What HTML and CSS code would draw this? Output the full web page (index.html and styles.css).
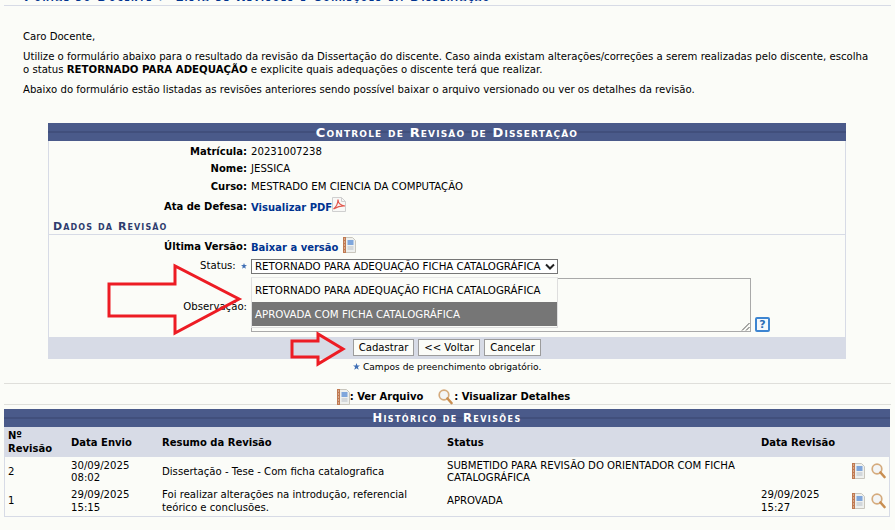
FILE: index.html
```html
<!DOCTYPE html>
<html lang="pt-BR">
<head>
<meta charset="utf-8">
<title>Controle de Revisão de Dissertação</title>
<link rel="stylesheet" href="styles.css">
</head>
<body>
<svg class="defs" width="0" height="0" aria-hidden="true">
  <defs>
    <symbol id="i-doc" viewBox="0 0 13 16">
      <path d="M.5.500h9l3 3v12H.5z" fill="#eef0ee" stroke="#c9c6bd"/>
      <rect x="0" y="0" width="3" height="16" fill="#c07a52"/>
      <path d="M1 2h1M1 5h1M1 8h1M1 11h1M1 14h1" stroke="#f1dccb" stroke-width="1"/>
      <rect x="4.500" y="3" width="6" height="5" fill="#7fa6dc"/>
      <path d="M4.500 10h6M4.500 12h6" stroke="#b8bfc8"/>
    </symbol>
    <symbol id="i-lens" viewBox="0 0 15 16">
      <circle cx="6" cy="6" r="4.800" fill="#f3f5f6" stroke="#d5ab7d" stroke-width="1.700"/>
      <path d="M9.500 9.500L13.500 14" stroke="#c98f52" stroke-width="2.600" stroke-linecap="round"/>
    </symbol>
    <symbol id="i-star" viewBox="0 0 8 8">
      <path d="M4 0l1 2.800 3 .1-2.400 1.800.9 3L4 6 1.500 7.700l.9-3L0 2.900l3-.1z" fill="#3f6fb5"/>
    </symbol>
  </defs>
</svg>

<h2 class="page-title">Portal do Docente &gt; Lista de Revisões e Correções em Dissertação</h2>

<div class="intro">
  <p>Caro Docente,</p>
  <p>Utilize o formulário abaixo para o resultado da revisão da Dissertação do discente. Caso ainda existam alterações/correções a serem realizadas pelo discente, escolha o status <b>RETORNADO PARA ADEQUAÇÃO</b> e explicite quais adequações o discente terá que realizar.</p>
  <p>Abaixo do formulário estão listadas as revisões anteriores sendo possível baixar o arquivo versionado ou ver os detalhes da revisão.</p>
</div>

<form class="form-box">
  <div class="caption">Controle de Revisão de Dissertação</div>
  <div class="form-body">
    <div class="row r-mat"><span class="lbl">Matrícula:</span><span>20231007238</span></div>
    <div class="row r-nome"><span class="lbl">Nome:</span><span>JESSICA</span></div>
    <div class="row r-curso"><span class="lbl">Curso:</span><span>MESTRADO EM CIENCIA DA COMPUTAÇÃO</span></div>
    <div class="row r-ata"><span class="lbl">Ata de Defesa:</span><span class="val-icon"><a class="link" href="#">Visualizar PDF</a><svg class="pdf" width="14" height="15" viewBox="0 0 14 15"><path d="M.5.500h9l4 4v10H.5z" fill="#f8f8f6" stroke="#cfcfcf"/><path d="M9.500.500v4h4" fill="none" stroke="#cfcfcf"/><path d="M1.500 12C4 10 6 7 6 2.500c0 3 2 6 7 6.500-4-.5-8 1-11.500 3z" fill="none" stroke="#e2574c" stroke-width="1.200"/></svg></span></div>
    <div class="subhead">Dados da Revisão</div>
    <div class="row r-ult"><span class="lbl">Última Versão:</span><span class="val-icon"><a class="link" href="#">Baixar a versão</a><svg class="doc-ult" width="13" height="16"><use href="#i-doc"/></svg></span></div>
    <div class="row r-status"><span class="lbl-plain">Status: <svg class="star" width="6" height="6"><use href="#i-star"/></svg></span><span class="select"><span>RETORNADO PARA ADEQUAÇÃO FICHA CATALOGRÁFICA</span><svg width="10" height="7" viewBox="0 0 10 7"><path d="M1 1.500l4 4 4-4" fill="none" stroke="#222" stroke-width="2"/></svg></span></div>
    <div class="row r-obs">
      <span class="lbl-plain obs-l">Observação:</span>
      <div class="obs-val">
        <div class="textarea"><svg class="grip" width="9" height="9" viewBox="0 0 9 9"><path d="M8.500 1L1 8.500M8.500 5L5 8.500" stroke="#555"/></svg></div>
        <span class="help">?</span>
      </div>
    </div>
  </div>
  <div class="form-foot">
    <button type="button" class="b1">Cadastrar</button>
    <button type="button" class="b2">&lt;&lt; Voltar</button>
    <button type="button" class="b3">Cancelar</button>
  </div>
  <ul class="dropdown">
    <li>RETORNADO PARA ADEQUAÇÃO FICHA CATALOGRÁFICA</li>
    <li class="sel">APROVADA COM FICHA CATALOGRÁFICA</li>
  </ul>
</form>

<p class="required"><svg class="star" width="7" height="7"><use href="#i-star"/></svg> Campos de preenchimento obrigatório.</p>

<div class="legend">
  <svg width="13" height="16"><use href="#i-doc"/></svg><span>: Ver Arquivo</span>
  <svg class="leg-lens" width="15" height="16"><use href="#i-lens"/></svg><span>: Visualizar Detalhes</span>
</div>

<div class="history">
  <div class="caption small">Histórico de Revisões</div>
  <table>
    <thead>
      <tr>
        <th class="c1">Nº Revisão</th><th class="c2">Data Envio</th><th class="c3">Resumo da Revisão</th><th class="c4">Status</th><th class="c5">Data Revisão</th><th class="c6"></th>
      </tr>
    </thead>
    <tbody>
      <tr>
        <td>2</td><td>30/09/2025 08:02</td><td>Dissertação - Tese - Com ficha catalografica</td><td>SUBMETIDO PARA REVISÃO DO ORIENTADOR COM FICHA CATALOGRÁFICA</td><td></td>
        <td class="acts"><svg width="13" height="16"><use href="#i-doc"/></svg><svg width="15" height="16"><use href="#i-lens"/></svg></td>
      </tr>
      <tr>
        <td>1</td><td>29/09/2025 15:15</td><td>Foi realizar alterações na introdução, referencial teórico e conclusões.</td><td>APROVADA</td><td>29/09/2025 15:27</td>
        <td class="acts"><svg width="13" height="16"><use href="#i-doc"/></svg><svg width="15" height="16"><use href="#i-lens"/></svg></td>
      </tr>
    </tbody>
  </table>
</div>

<svg class="arrows" width="895" height="530" viewBox="0 0 895 530" aria-hidden="true">
  <path d="M109 284H175V266L239 299 175 333V316H109z" fill="none" stroke="#ed1c24" stroke-width="3"/>
  <path d="M292 341H318V334L343 349 318 364V357H292z" fill="none" stroke="#ed1c24" stroke-width="3"/>
</svg>
</body>
</html>
```

FILE: styles.css
```css
* { box-sizing: border-box; }
html, body { margin: 0; padding: 0; height: 530px; overflow: hidden; }
body {
  position: relative;
  background: #fbfcf8;
  color: #000;
  font-family: "DejaVu Sans", Verdana, sans-serif;
  font-size: 10.150px;
  line-height: 12px;
}
.defs { position: absolute; }
.page-title {
  margin: -9px 4px 0;
  padding: 0 20px 2px;
  height: 15px;
  border-bottom: 1px solid #d7dbe6;
  color: #003390;
  font-size: 12px;
  line-height: 12px;
  font-weight: bold;
  font-variant: small-caps;
  letter-spacing: 1.400px;
  white-space: nowrap;
  overflow: hidden;
}
.intro { padding: 0 24px 0 23px; margin-top: 25px; }
.intro p { margin: 0 0 8px; }
.intro p + p { line-height: 12.500px; }
.intro b { font-size: 10.200px; }

.form-box {
  position: relative;
  width: 798px;
  margin: 26px 0 0 48px;
}
.caption {
  height: 18px;
  background: linear-gradient(#4a5a8a 0 8px, #414f7c 8px 10px, #4a5a8a 10px);
  color: #fff;
  text-align: center;
  font-weight: bold;
  font-variant: small-caps;
  font-size: 13px;
  line-height: 19px;
  letter-spacing: 1.150px;
}
.form-body {
  height: 196px;
  border: solid #d7dbe6;
  border-width: 0 1px;
  position: relative;
}
.row {
  display: grid;
  grid-template-columns: 198px 1fr;
  column-gap: 4px;
  align-items: center;
}
.lbl { text-align: right; font-weight: bold; font-size: 10px; }
.lbl-plain { text-align: right; }
.r-mat { padding-top: 5px; height: 17px; }
.r-nome { padding-top: 5px; height: 17px; }
.r-curso { padding-top: 6px; height: 18px; }
.r-ata { padding-top: 7px; height: 20px; }
.val-icon { display: flex; align-items: flex-start; }
.link { color: #003390; font-weight: bold; font-size: 10px; text-decoration: none; padding-top: 2px; }
.pdf { margin-top: -3px; }
.subhead {
  margin: 8px 0 0;
  padding: 0 0 1px 4px;
  height: 14px;
  border-bottom: 1px solid #d7dbe6;
  color: #2f3c6e;
  font-weight: bold;
  font-variant: small-caps;
  font-size: 11px;
  letter-spacing: 1.100px;
}
.r-ult { padding-top: 5px; height: 20px; }
.doc-ult { margin: -3px 0 0 5px; }
.r-status { padding-top: 3px; height: 20px; }
.r-status .lbl-plain { padding-right: 0; }
.select {
  display: flex;
  align-items: center;
  justify-content: space-between;
  width: 307px;
  height: 15px;
  padding: 0 2px 0 3px;
  border: 1px solid #767676;
  background: #fff;
  white-space: nowrap;
  font-size: 10.250px;
}
.r-obs { margin-top: 3px; height: 54px; align-items: start; }
.obs-l { padding-top: 23px; padding-right: 0; }
.obs-val { display: flex; align-items: flex-end; gap: 4px; }
.textarea {
  position: relative;
  width: 500px;
  height: 54px;
  border: 1px solid #a9a9a9;
  background: #fbfcf8;
}
.grip { position: absolute; right: 0; bottom: 0; }
.help {
  width: 15px;
  height: 15px;
  border: 2px solid #3d85d1;
  border-radius: 2px;
  color: #2a6db5;
  background: #f4f8fc;
  font-weight: bold;
  font-size: 11px;
  line-height: 11px;
  text-align: center;
}
.form-foot {
  display: flex;
  justify-content: center;
  gap: 4px;
  padding-top: 2px;
  height: 22px;
  background: #d7dbe6;
}
button {
  height: 17px;
  padding: 0;
  border: 1px solid #9c9c9c;
  border-radius: 0;
  background: #fbfcf8;
  color: #000;
  font: 10.150px/13px "DejaVu Sans", Verdana, sans-serif;
}
.b1 { width: 61px; }
.b2 { width: 62px; }
.b3 { width: 57px; }
.dropdown {
  position: absolute;
  left: 203px;
  top: 154px;
  width: 307px;
  margin: 0;
  padding: 0 0 1px;
  list-style: none;
  background: #fbfcf8;
  border: 1px solid #dedede;
  border-top-color: #e8e8e8;
}
.dropdown li {
  height: 24px;
  padding-left: 3px;
  line-height: 24px;
  white-space: nowrap;
  font-size: 10.250px;
}
.dropdown .sel { background: #767676; color: #fff; }
.star { display: inline-block; margin: 0 0 0 2px; }
.required {
  margin: 1px 0 0;
  padding-left: 351px;
  height: 14px;
  font-size: 9.100px;
  line-height: 14px;
}
.legend {
  display: flex;
  justify-content: center;
  align-items: center;
  height: 22px;
  margin: 9px 4px 0;
  padding: 6px 0 0 12px;
  border: solid #dfdfdb;
  border-width: 1px 0;
  font-weight: bold;
  font-size: 10px;
}
.leg-lens { margin: 0 1px 0 15px; }
.history { margin: 4px 5px 0 4px; border: solid #d7dbe6; border-width: 0 1px 1px; }
.caption.small { font-size: 11.500px; margin: 0 -1px; line-height: 19px; letter-spacing: 1.400px; }
table { width: 100%; border-collapse: collapse; table-layout: fixed; }
th {
  background: #d7dbe6;
  text-align: left;
  font-weight: bold;
  font-size: 10px;
  height: 30px;
  padding: 1px 3px 0;
  line-height: 13px;
  vertical-align: middle;
}
td { padding: 3px 3px 1px; vertical-align: middle; line-height: 12.500px; height: 29px; }
tbody tr:last-child td { height: 30px; padding: 3px 3px 1px; }
.c1 { width: 63px; }
.c2 { width: 91px; }
.c3 { width: 285px; }
.c4 { width: 314px; }
.c5 { width: 91px; }
td.acts { padding: 0 0 0 3px; white-space: nowrap; }
tbody tr:last-child td.acts { padding: 0 0 0 3px; }
.acts svg { vertical-align: middle; }
.acts svg + svg { margin-left: 6px; }
.arrows { position: absolute; left: 0; top: 0; pointer-events: none; }
```
